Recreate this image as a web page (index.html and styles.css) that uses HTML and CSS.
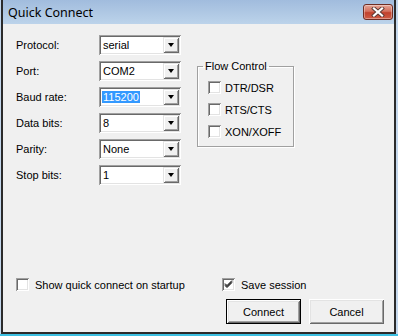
FILE: index.html
```html
<!DOCTYPE html>
<html lang="en">

<head>
  <meta charset="UTF-8">
  <title>Quick Connect</title>
  <link rel="stylesheet" href="styles.css">
</head>

<body>
  <div class="window">
    <div class="frame">
      <header class="titlebar">
        <h1>Quick Connect</h1>
        <button class="close" aria-label="Close">
          <svg width="14" height="10" viewBox="0 0 14 10">
            <path d="M3 1.5 L11 8.5 M11 1.5 L3 8.5" stroke="#5a3a36" stroke-width="4" stroke-linecap="square" />
            <path d="M3 1.5 L11 8.5 M11 1.5 L3 8.5" stroke="#fff" stroke-width="2.2" stroke-linecap="square" />
          </svg>
        </button>
      </header>

      <main class="client">
        <div class="top">
          <div class="fields">
            <label>Protocol:</label>
            <div class="combo"><span class="value">serial</span><span class="arrow"></span></div>

            <label>Port:</label>
            <div class="combo"><span class="value">COM2</span><span class="arrow"></span></div>

            <label>Baud rate:</label>
            <div class="combo"><span class="value"><span class="selected">115200</span></span><span class="arrow"></span></div>

            <label>Data bits:</label>
            <div class="combo"><span class="value">8</span><span class="arrow"></span></div>

            <label>Parity:</label>
            <div class="combo"><span class="value">None</span><span class="arrow"></span></div>

            <label>Stop bits:</label>
            <div class="combo"><span class="value">1</span><span class="arrow"></span></div>
          </div>

          <fieldset class="group">
            <legend>Flow Control</legend>
            <div class="check"><span class="box"></span>DTR/DSR</div>
            <div class="check"><span class="box"></span>RTS/CTS</div>
            <div class="check"><span class="box"></span>XON/XOFF</div>
          </fieldset>
        </div>

        <div class="options">
          <div class="check wide"><span class="box"></span>Show quick connect on startup</div>
          <div class="check">
            <span class="box">
              <svg width="13" height="13" viewBox="0 0 13 13">
                <path d="M3 5.5 L5 7.5 L10 2.5 M3 6.5 L5 8.5 L10 3.5 M3 7.5 L5 9.5 L10 4.5" stroke="#000" stroke-width="1" fill="none" />
              </svg>
            </span>Save session
          </div>
        </div>

        <div class="actions">
          <button class="btn default">Connect</button>
          <button class="btn">Cancel</button>
        </div>
      </main>
    </div>
  </div>
</body>

</html>
```

FILE: styles.css
```css
* {
  box-sizing: border-box;
}

body {
  margin: 0;
  background: #fff;
  font-family: 'Liberation Sans', Arial, sans-serif;
  font-size: 11px;
  color: #000;
}

.window {
  width: 398px;
  height: 336px;
  display: flex;
  flex-direction: column;
  padding: 0 2px 0 1px;
  background: #c4d7ec;
  border-bottom: 2px solid #3cc0e2;
}

.frame {
  flex: 1;
  display: flex;
  flex-direction: column;
  border: 2px solid #2b2b2b;
  border-top: 0;
}

.titlebar {
  height: 24px;
  display: flex;
  align-items: center;
  justify-content: space-between;
  padding: 0 1px 0 5px;
  background: linear-gradient(#a1bcdd, #bcd3ea);
}

.titlebar h1 {
  margin: 0;
  font-family: 'Noto Sans', sans-serif;
  font-weight: 400;
  font-size: 12.5px;
}

.close {
  width: 30px;
  height: 16px;
  padding: 0;
  display: flex;
  align-items: center;
  justify-content: center;
  border: 1px solid #6e2d24;
  border-radius: 3px;
  background: linear-gradient(#e5a597, #d4705d 45%, #c1412d 55%, #cf5d46);
  box-shadow: inset 0 0 0 1px rgba(255, 255, 255, 0.35);
}

.client {
  flex: 1;
  display: flex;
  flex-direction: column;
  padding: 11px 10px 8px 13px;
  background: #f0f0f0;
}

.top {
  display: flex;
  align-items: flex-start;
  gap: 16px;
}

.fields {
  display: grid;
  grid-template-columns: 83px 82px;
  grid-auto-rows: 20px;
  row-gap: 6px;
  align-items: center;
}

.combo {
  height: 20px;
  display: flex;
  align-items: center;
  padding: 2px;
  background: #fff;
  box-shadow: inset 1px 1px #a0a0a0, inset -1px -1px #fff, inset 2px 2px #696969, inset -2px -2px #e3e3e3;
}

.value {
  flex: 1;
  padding-left: 2px;
  line-height: 13px;
}

.selected {
  margin-left: -1px;
  padding: 0 1px;
  background: #3399ff;
  color: #fff;
}

.arrow {
  width: 16px;
  height: 16px;
  display: flex;
  align-items: center;
  justify-content: center;
  background: #f0f0f0;
  box-shadow: inset 1px 1px #e3e3e3, inset -1px -1px #696969, inset 2px 2px #fff, inset -2px -2px #a0a0a0;
}

.arrow::before {
  content: '';
  border-style: solid;
  border-width: 4px 3.5px 0;
  border-color: #000 transparent transparent;
}

.group {
  width: 97px;
  margin: 25px 0 0;
  padding: 8px 0 8px 10px;
  border: 1px solid #a0a0a0;
  box-shadow: 1px 1px #fff, inset 1px 1px #fff;
  display: flex;
  flex-direction: column;
  gap: 9px;
}

.group legend {
  margin-left: -5px;
  padding: 0 2px;
  line-height: 13px;
}

.check {
  display: flex;
  align-items: center;
  gap: 4px;
  height: 13px;
  white-space: nowrap;
}

.box {
  width: 13px;
  height: 13px;
  flex: none;
  display: flex;
  background: #fff;
  box-shadow: inset 1px 1px #a0a0a0, inset -1px -1px #fff, inset 2px 2px #696969, inset -2px -2px #e3e3e3;
}

.options {
  margin-top: auto;
  display: flex;
}

.options .check {
  gap: 6px;
}

.options .wide {
  width: 206px;
}

.actions {
  margin-top: 8px;
  display: flex;
  justify-content: flex-end;
  gap: 8px;
}

.btn {
  width: 75px;
  height: 25px;
  padding: 0;
  font: inherit;
  color: #000;
  border: 0;
  background: #f0f0f0;
  box-shadow: inset 1px 1px #fff, inset -1px -1px #696969, inset 2px 2px #e3e3e3, inset -2px -2px #a0a0a0;
}

.btn.default {
  border: 1px solid #000;
}
```
